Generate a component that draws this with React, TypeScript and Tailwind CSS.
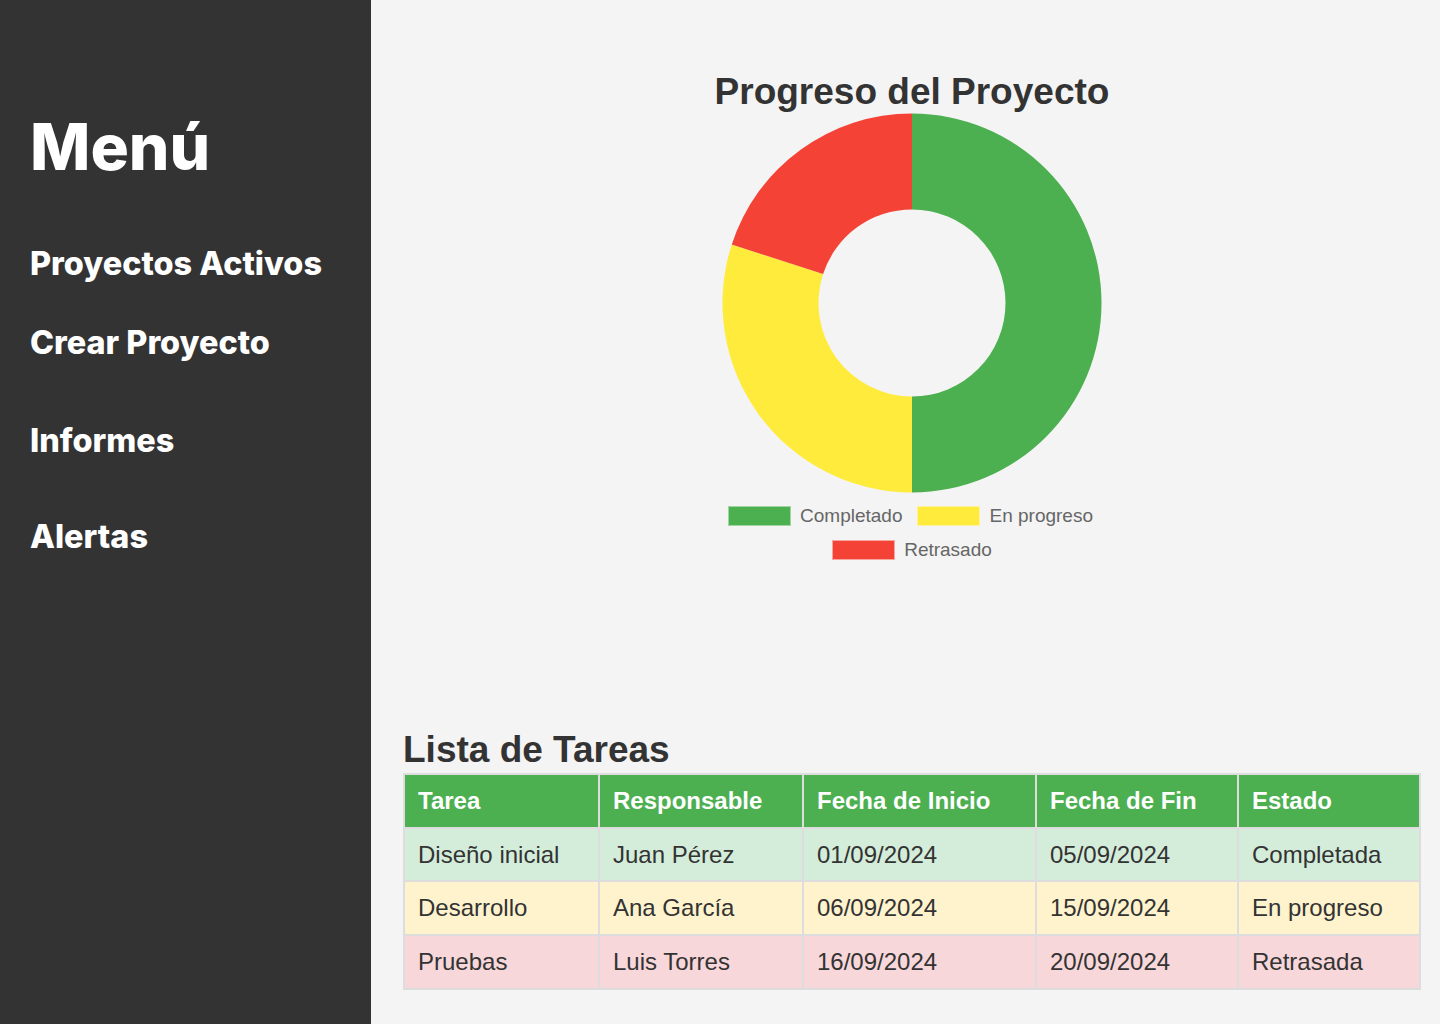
import React from 'react';

type Task = {
  tarea: string;
  responsable: string;
  inicio: string;
  fin: string;
  estado: string;
  rowClass: string;
};

const tasks: Task[] = [
  { tarea: 'Diseño inicial', responsable: 'Juan Pérez', inicio: '01/09/2024', fin: '05/09/2024', estado: 'Completada', rowClass: 'bg-[#d4edda]' },
  { tarea: 'Desarrollo', responsable: 'Ana García', inicio: '06/09/2024', fin: '15/09/2024', estado: 'En progreso', rowClass: 'bg-[#fff3cd]' },
  { tarea: 'Pruebas', responsable: 'Luis Torres', inicio: '16/09/2024', fin: '20/09/2024', estado: 'Retrasada', rowClass: 'bg-[#f8d7da]' },
];

const columns = [
  { label: 'Tarea', width: 'w-[195px]' },
  { label: 'Responsable', width: 'w-[204px]' },
  { label: 'Fecha de Inicio', width: 'w-[233px]' },
  { label: 'Fecha de Fin', width: 'w-[202px]' },
  { label: 'Estado', width: 'w-[182px]' },
];

// donut: 50 / 30 / 20, clockwise from the top
const Donut: React.FC = () => (
  <svg width="380" height="380" viewBox="0 0 380 380" className="block">
    <path d="M190 0.5 A189.5 189.5 0 0 1 190 379.5 L190 283.5 A93.5 93.5 0 0 0 190 96.5 Z" fill="#4caf50" />
    <path d="M190 379.5 A189.5 189.5 0 0 1 9.77 131.44 L101.08 161.11 A93.5 93.5 0 0 0 190 283.5 Z" fill="#ffeb3b" />
    <path d="M9.77 131.44 A189.5 189.5 0 0 1 190 0.5 L190 96.5 A93.5 93.5 0 0 0 101.08 161.11 Z" fill="#f44336" />
  </svg>
);

const LegendItem: React.FC<{ label: string; box: string }> = ({ label, box }) => (
  <div className="flex items-center gap-[9px]">
    <span className={`block w-[63px] h-[20px] border-[1.5px] ${box}`} />
    <span className="text-[19px] leading-[20px] text-[#666]">{label}</span>
  </div>
);

export default function App() {
  return (
    <div className="flex min-h-[1024px] bg-[#f4f4f4] font-['Liberation_Sans',Arial,sans-serif]">
      <aside className="w-[371px] shrink-0 bg-[#333333] text-white font-['Inter',sans-serif] px-[30px] pt-[115px]">
        <h1 className="text-[64px] leading-none font-extrabold">Menú</h1>
        <nav className="flex flex-col text-[32.4px] leading-none font-extrabold">
          <a className="mt-[69px]">Proyectos Activos</a>
          <a className="mt-[47px]">Crear Proyecto</a>
          <a className="mt-[65px]">Informes</a>
          <a className="mt-[64px]">Alertas</a>
        </nav>
      </aside>

      <main className="flex-1 pl-[32px] pr-[21px] pt-[72px]">
        <section className="flex flex-col items-center">
          <h2 className="text-[37px] leading-[40px] font-bold text-[#333]">Progreso del Proyecto</h2>
          <div className="mt-[1px]">
            <Donut />
          </div>
          <div className="mt-[13px] flex gap-[15px] pr-[3px]">
            <LegendItem label="Completado" box="bg-[#4caf50] border-[#9fd6a1]" />
            <LegendItem label="En progreso" box="bg-[#ffeb3b] border-[#fff3a0]" />
          </div>
          <div className="mt-[14px] flex">
            <LegendItem label="Retrasado" box="bg-[#f44336] border-[#f7a59f]" />
          </div>
        </section>

        <section className="mt-[170px]">
          <h2 className="text-[37px] leading-[40px] font-bold text-[#333]">Lista de Tareas</h2>
          <table className="mt-[3px] w-[1016px] table-fixed border-collapse text-[24px] leading-[27.7px]">
            <thead>
              <tr className="bg-[#4caf50] text-white">
                {columns.map((c) => (
                  <th key={c.label} className={`${c.width} border-2 border-[#ddd] px-[13px] py-[12px] text-left font-bold`}>
                    {c.label}
                  </th>
                ))}
              </tr>
            </thead>
            <tbody>
              {tasks.map((t) => (
                <tr key={t.tarea} className={`${t.rowClass} text-[#333]`}>
                  <td className="border-2 border-[#ddd] px-[13px] py-[12px]">{t.tarea}</td>
                  <td className="border-2 border-[#ddd] px-[13px] py-[12px]">{t.responsable}</td>
                  <td className="border-2 border-[#ddd] px-[13px] py-[12px]">{t.inicio}</td>
                  <td className="border-2 border-[#ddd] px-[13px] py-[12px]">{t.fin}</td>
                  <td className="border-2 border-[#ddd] px-[13px] py-[12px]">{t.estado}</td>
                </tr>
              ))}
            </tbody>
          </table>
        </section>
      </main>
    </div>
  );
}
